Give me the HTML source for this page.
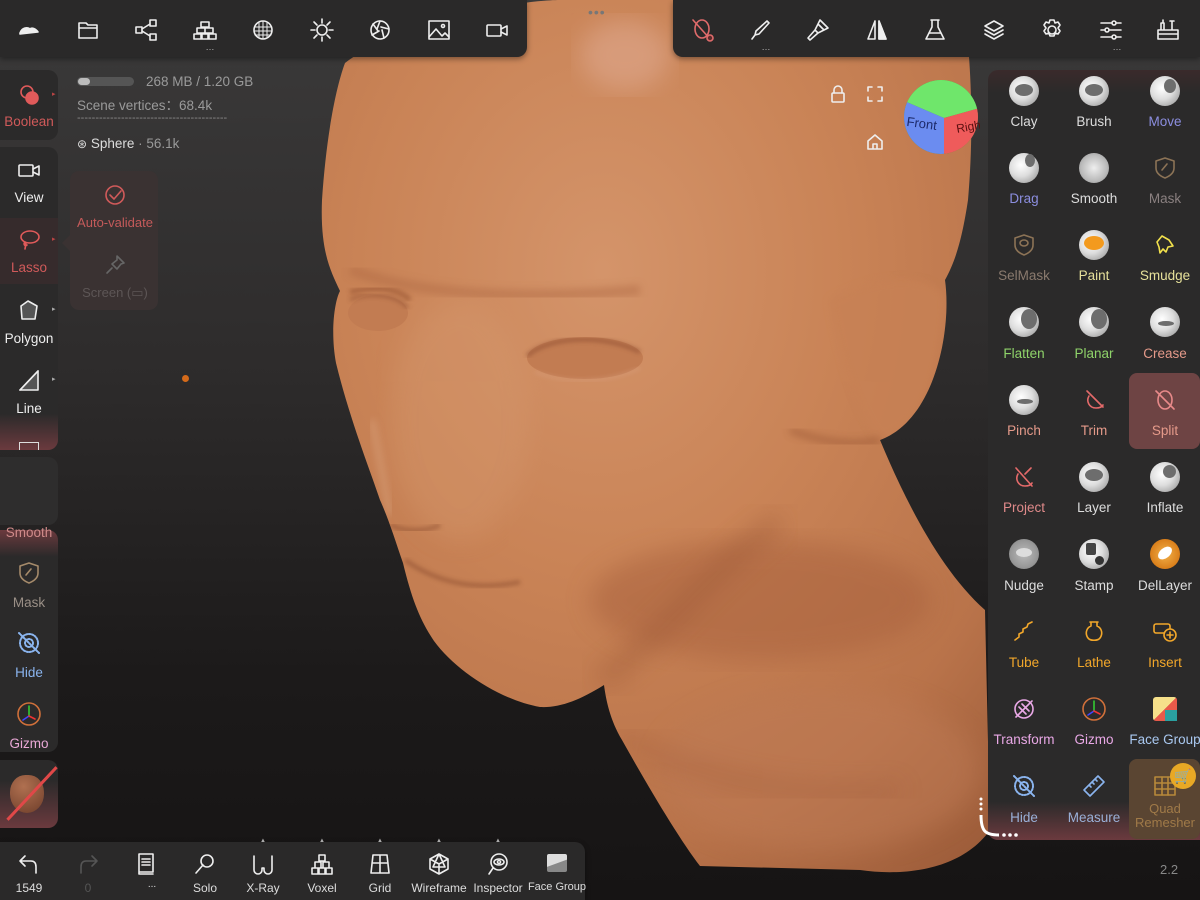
<!DOCTYPE html>
<html><head><meta charset="utf-8"><style>
*{margin:0;padding:0;box-sizing:border-box}
body{width:1200px;height:900px;overflow:hidden;position:relative;font-family:"Liberation Sans",sans-serif;background:linear-gradient(#3b3a3a 0%,#2e2c2c 40%,#1c1a1a 75%,#161414 100%)}
.abs{position:absolute}
.bar{position:absolute;background:#2a2929;box-shadow:0 2px 6px rgba(0,0,0,.4)}
.ic{position:absolute;width:26px;height:26px;transform:translate(-13px,-13px)}
.ic svg{width:26px;height:26px;fill:none;stroke:#eee;stroke-width:1.6;stroke-linecap:round;stroke-linejoin:round}
.lbl{position:absolute;transform:translateX(-50%);font-size:13.5px;white-space:nowrap;color:#ddd}
.dots{position:absolute;transform:translateX(-50%);font-size:9px;color:#bbb;letter-spacing:0}
.ball{position:absolute;width:30px;height:30px;border-radius:50%;transform:translate(-15px,-15px);background:radial-gradient(circle at 40% 40%,#fff 0%,#ddd 45%,#888 100%)}
.ball i{position:absolute;border-radius:50%;background:#6d6d6d}
.panel{position:absolute;background:#2b2a2a;border-radius:10px}
</style></head><body>

<!-- head -->
<svg class="abs" style="left:0;top:0" width="1200" height="900">
<defs>
<radialGradient id="hg" cx="0.42" cy="0.3" r="0.85">
<stop offset="0" stop-color="#d4946a"/><stop offset="0.4" stop-color="#c98356"/><stop offset="0.75" stop-color="#b9734a"/><stop offset="1" stop-color="#9a5a38"/></radialGradient>
<filter id="bl"><feGaussianBlur stdDeviation="12"/></filter>
<filter id="bl2"><feGaussianBlur stdDeviation="4"/></filter>
<filter id="bl3"><feGaussianBlur stdDeviation="2"/></filter>
<clipPath id="hc"><path d="M345 63 C400 20 520 0 560 0 L962 0 C970 40 975 120 968 200 C962 240 955 262 945 280 C952 330 935 420 880 440 C905 500 940 570 985 610 L990 830 C960 872 900 876 860 870 L700 866 C680 840 650 790 622 740 C610 720 606 700 604 685 C580 700 560 708 540 707 C500 700 455 670 434 641 C420 620 412 600 403 563 C395 540 389 520 380 500 C370 470 350 420 336 363 C330 330 335 300 340 291 C330 270 320 250 322 200 C326 140 335 90 345 63 Z"/></clipPath>
</defs>
<g clip-path="url(#hc)">
<rect x="300" y="0" width="720" height="900" fill="url(#hg)"/>
<ellipse cx="625" cy="55" rx="45" ry="35" fill="#e2ae98" opacity=".5" filter="url(#bl)"/>
<ellipse cx="460" cy="420" rx="70" ry="120" fill="#d69a70" opacity=".35" filter="url(#bl)"/>
<ellipse cx="760" cy="600" rx="170" ry="60" fill="#a7613d" opacity=".5" filter="url(#bl)"/>
<ellipse cx="820" cy="770" rx="160" ry="80" fill="#bd7a55" opacity=".5" filter="url(#bl)"/>
<path d="M620 735 C700 780 800 800 900 790" stroke="#a05c3a" stroke-width="14" opacity=".4" fill="none" filter="url(#bl)"/>
<path d="M350 270 C420 295 520 300 640 290" stroke="#b06b45" stroke-width="10" opacity=".5" fill="none" filter="url(#bl2)"/>
<path d="M350 292 C380 285 400 290 410 300" stroke="#965233" stroke-width="5" opacity=".6" fill="none" filter="url(#bl3)"/>
<ellipse cx="378" cy="313" rx="30" ry="18" fill="#c27c52"/>
<path d="M350 300 C365 292 395 293 408 308" stroke="#8e4e30" stroke-width="3" opacity=".6" fill="none" filter="url(#bl3)"/>
<ellipse cx="585" cy="358" rx="58" ry="21" fill="#c27c52"/>
<path d="M527 356 C545 338 600 332 640 352" stroke="#8e4e30" stroke-width="4" opacity=".6" fill="none" filter="url(#bl3)"/>
<path d="M535 372 C570 385 610 382 640 368" stroke="#d9a080" stroke-width="2" opacity=".7" fill="none" filter="url(#bl3)"/>
<path d="M600 680 C650 650 720 560 780 520" stroke="#9a5636" stroke-width="18" opacity=".45" fill="none" filter="url(#bl)"/>
<path d="M405 560 C440 585 480 590 520 582" stroke="#8e4f31" stroke-width="4" opacity=".6" fill="none" filter="url(#bl3)"/>
<path d="M390 525 C405 532 425 532 440 525" stroke="#8e4f31" stroke-width="5" opacity=".5" fill="none" filter="url(#bl3)"/>
<path d="M372 420 C380 460 385 490 390 515" stroke="#e0b090" stroke-width="5" opacity=".5" fill="none" filter="url(#bl2)"/>
<path d="M830 300 C880 270 940 275 945 300 C940 380 920 430 880 440 C860 420 840 360 830 300Z" fill="#c78155" opacity=".8" filter="url(#bl2)"/>
<path d="M790 430 C830 445 860 445 880 440" stroke="#9a5636" stroke-width="6" opacity=".6" fill="none" filter="url(#bl2)"/>
</g>
</svg>

<!-- top bars -->
<div class="bar" style="left:0;top:0;width:527px;height:57px;border-radius:0 0 10px 0"></div>
<div class="bar" style="left:673px;top:0;width:527px;height:57px;border-radius:0 0 0 10px"></div>
<div class="abs" style="left:588px;top:4px;color:#777;font-size:14px;letter-spacing:1px">•••</div>

<div class="ic" style="left:29px;top:30px"><svg viewBox="0 0 26 26"><path d="M4 16 C6 10 12 10 14 12 C16 10 20 12 22 15 L4 17Z" fill="#eee"/></svg></div>
<div class="ic" style="left:88px;top:30px"><svg viewBox="0 0 26 26"><path d="M4 6h7l2 2h9v13H4z M4 11h18"/></svg></div>
<div class="ic" style="left:146px;top:30px"><svg viewBox="0 0 26 26"><rect x="3" y="10" width="6" height="6"/><rect x="17" y="3" width="6" height="6"/><rect x="17" y="17" width="6" height="6"/><path d="M9 12l8-5M9 14l8 5"/></svg></div>
<div class="ic" style="left:205px;top:30px"><svg viewBox="0 0 26 26"><path d="M9 5h8v5H9zM5 11h8v5H5zM13 11h8v5h-8zM2 17h8v5H2zM9 17h8v5H9zM16 17h8v5h-8z"/></svg></div>
<div class="dots" style="left:210px;top:42px">…</div>
<div class="ic" style="left:263px;top:30px"><svg viewBox="0 0 26 26"><circle cx="13" cy="13" r="9"/><path d="M9 6v14M13 4v18M17 6v14M5 10h16M4 14h18M5 18h16" stroke-width="1"/></svg></div>
<div class="ic" style="left:322px;top:30px"><svg viewBox="0 0 26 26"><circle cx="13" cy="13" r="5"/><path d="M13 2v4M13 20v4M2 13h4M20 13h4M5 5l3 3M18 18l3 3M5 21l3-3M18 8l3-3"/></svg></div>
<div class="ic" style="left:380px;top:30px"><svg viewBox="0 0 26 26"><circle cx="13" cy="13" r="9"/><path d="M13 4l-3 8M22 12l-8-2M17 21l-2-8M5 18l7-4M6 7l5 7"/></svg></div>
<div class="ic" style="left:439px;top:30px"><svg viewBox="0 0 26 26"><rect x="3" y="4" width="20" height="18"/><path d="M3 20l7-8 6 7 3-3 4 4"/><circle cx="17" cy="9" r="1.5"/></svg></div>
<div class="ic" style="left:497px;top:30px"><svg viewBox="0 0 26 26"><rect x="3" y="8" width="14" height="11" rx="1"/><path d="M17 12l6-3v9l-6-3"/></svg></div>

<div class="ic" style="left:703px;top:30px"><svg viewBox="0 0 26 26" style="stroke:#e06b6b"><ellipse cx="12" cy="12" rx="7" ry="9"/><path d="M3 3l18 20"/><circle cx="20" cy="21" r="3" fill="#5a2c2c"/></svg></div>
<div class="ic" style="left:760px;top:30px"><svg viewBox="0 0 26 26"><path d="M20 4l2 2-10 11-4 1 1-4zM8 18l-3 4"/></svg></div>
<div class="dots" style="left:766px;top:42px">…</div>
<div class="ic" style="left:818px;top:30px"><svg viewBox="0 0 26 26"><path d="M15 3l8 8-4 2-6-6zM13 7l-3 6 3 3 6-3M10 13l-7 8 2 2 8-7"/></svg></div>
<div class="ic" style="left:877px;top:30px"><svg viewBox="0 0 26 26"><path d="M11 4v18H4zM15 4v18h7z" /><path d="M15 4l7 18h-7z" fill="#eee"/></svg></div>
<div class="ic" style="left:935px;top:30px"><svg viewBox="0 0 26 26"><path d="M9 3h8M10 3v7l-6 12h18l-6-12V3M7 16h12"/></svg></div>
<div class="ic" style="left:994px;top:30px"><svg viewBox="0 0 26 26"><path d="M13 4l9 5-9 5-9-5zM4 13l9 5 9-5M4 17l9 5 9-5"/></svg></div>
<div class="ic" style="left:1052px;top:30px"><svg viewBox="0 0 26 26"><circle cx="13" cy="13" r="4"/><path d="M11 3h4l1 3 3-1 2 3-2 3 2 3-2 3-3-1-1 3h-4l-1-3-3 1-2-3 2-3-2-3 2-3 3 1z"/></svg></div>
<div class="ic" style="left:1111px;top:30px"><svg viewBox="0 0 26 26"><path d="M3 6h20M3 13h20M3 20h20"/><circle cx="16" cy="6" r="2" fill="#2a2929"/><circle cx="9" cy="13" r="2" fill="#2a2929"/><circle cx="16" cy="20" r="2" fill="#2a2929"/></svg></div>
<div class="dots" style="left:1117px;top:42px">…</div>
<div class="ic" style="left:1168px;top:30px"><svg viewBox="0 0 26 26"><path d="M3 13h20v9H3zM3 17h20M6 13V6h3v7M17 13V4M15 4h4M8 3v3"/></svg></div>

<!-- info -->
<div class="abs" style="left:77px;top:77px;width:57px;height:9px;border-radius:5px;background:#555"></div>
<div class="abs" style="left:78px;top:78px;width:12px;height:7px;border-radius:4px;background:#bbb"></div>
<div class="abs" style="left:146px;top:74px;font-size:13.5px;color:#9a9a9a">268 MB / 1.20 GB</div>
<div class="abs" style="left:77px;top:94px;font-size:13.5px;color:#9a9a9a">Scene vertices：68.4k</div>
<div class="abs" style="left:77px;top:112px;font-size:11px;color:#888">-----------------------------------------</div>
<div class="abs" style="left:77px;top:136px;font-size:13.5px;color:#ddd"><span style="font-size:12px">⊛</span> Sphere <span style="color:#999">· 56.1k</span></div>
<div class="abs" style="left:182px;top:375px;width:7px;height:7px;border-radius:50%;background:#d46a1a"></div>

<!-- viewport icons -->
<div class="ic" style="left:838px;top:94px"><svg viewBox="0 0 26 26"><rect x="7" y="12" width="12" height="9" rx="1"/><path d="M9 12V9a4 4 0 018 0v3"/></svg></div>
<div class="ic" style="left:875px;top:94px"><svg viewBox="0 0 26 26"><path d="M6 10V6h4M16 6h4v4M20 16v4h-4M10 20H6v-4"/></svg></div>
<div class="ic" style="left:875px;top:142px"><svg viewBox="0 0 26 26"><path d="M6 12l7-6 7 6v8H6zM11 20v-5h4v5"/></svg></div>
<svg class="abs" style="left:902px;top:78px" width="78" height="78" viewBox="0 0 78 78">
<clipPath id="cc"><circle cx="39" cy="39" r="37"/></clipPath>
<g clip-path="url(#cc)"><rect width="78" height="78" fill="#3a9a3a"/><path d="M0 0h78v30L42 40 0 22z" fill="#6fe66b"/><path d="M0 22l42 18v38H0z" fill="#6b8cf0"/><path d="M42 40l36-10v48H42z" fill="#ef5b5b"/></g>
<text x="4" y="50" font-size="13" font-family="Liberation Sans" fill="#1d2a6a" transform="rotate(8 20 50)">Front</text>
<text x="55" y="54" font-size="12" font-family="Liberation Sans" fill="#5a1010" transform="rotate(-10 60 54)">Right</text>
</svg>

<!-- left column -->
<div class="panel" style="left:-10px;top:70px;width:68px;height:70px"></div>
<div class="ic" style="left:29px;top:95px"><svg viewBox="0 0 26 26" style="stroke:#e05a5a"><circle cx="11" cy="10" r="6"/><circle cx="16" cy="16" r="6" fill="#e05a5a"/></svg></div>
<div class="lbl" style="left:29px;top:114px;color:#d05a5a">Boolean</div>
<div class="abs" style="left:52px;top:90px;color:#b44;font-size:7px">▸</div>

<div class="panel" style="left:-10px;top:147px;width:68px;height:303px;background:linear-gradient(#2b2a2a 88%,#6b3a3e)"></div>
<div class="ic" style="left:29px;top:170px"><svg viewBox="0 0 26 26"><rect x="3" y="8" width="14" height="11" rx="1"/><path d="M17 12l6-3v9l-6-3"/></svg></div>
<div class="lbl" style="left:29px;top:190px;color:#eee">View</div>
<div class="abs" style="left:0;top:218px;width:58px;height:66px;background:#362b2c"></div>
<div class="ic" style="left:29px;top:240px"><svg viewBox="0 0 26 26" style="stroke:#e05a5a"><ellipse cx="14" cy="10" rx="9" ry="6"/><path d="M9 15c-2 2 0 5 2 3M10 16l-1 6"/></svg></div>
<div class="lbl" style="left:29px;top:260px;color:#d05a5a">Lasso</div>
<div class="abs" style="left:52px;top:235px;color:#b44;font-size:7px">▸</div>
<div class="ic" style="left:29px;top:310px"><svg viewBox="0 0 26 26"><path d="M5 9l7-5 9 5-2 13H6z" fill="#555"/></svg></div>
<div class="lbl" style="left:29px;top:331px;color:#eee">Polygon</div>
<div class="abs" style="left:52px;top:305px;color:#aaa;font-size:7px">▸</div>
<div class="ic" style="left:29px;top:380px"><svg viewBox="0 0 26 26"><path d="M4 23L22 4v19z" fill="#555"/><path d="M4 23L22 4"/></svg></div>
<div class="lbl" style="left:29px;top:401px;color:#eee">Line</div>
<div class="abs" style="left:52px;top:375px;color:#aaa;font-size:7px">▸</div>
<div class="abs" style="left:19px;top:442px;width:20px;height:8px;border:1.5px solid #ddd;border-bottom:none"></div>

<div class="panel" style="left:-10px;top:457px;width:68px;height:68px;background:#2e2d2d"></div>
<div class="panel" style="left:-10px;top:530px;width:68px;height:222px;background:linear-gradient(#6b3a3e,#2b2a2a 12%)"></div>
<div class="lbl" style="left:29px;top:525px;color:#d08a8a">Smooth</div>
<div class="ic" style="left:29px;top:573px"><svg viewBox="0 0 26 26" style="stroke:#a58a6a"><path d="M13 3l9 3v7c0 5-4 8-9 10-5-2-9-5-9-10V6z"/><path d="M15 9l-5 6"/></svg></div>
<div class="lbl" style="left:29px;top:595px;color:#9a8f86">Mask</div>
<div class="ic" style="left:29px;top:643px"><svg viewBox="0 0 26 26" style="stroke:#8ab4ee;stroke-dasharray:1.5 1.5;stroke-width:2"><circle cx="13" cy="13" r="9"/><circle cx="13" cy="13" r="4"/><path d="M3 3l20 20"/></svg></div>
<div class="lbl" style="left:29px;top:665px;color:#8ab4ee">Hide</div>
<div class="ic" style="left:29px;top:714px"><svg viewBox="0 0 26 26"><circle cx="13" cy="13" r="11" style="stroke:#d0703a"/><path d="M13 5v10" style="stroke:#3c3"/><path d="M13 15l-6 4" style="stroke:#44f"/><path d="M13 15l6 3" style="stroke:#e33"/></svg></div>
<div class="lbl" style="left:29px;top:736px;color:#e9a8d6">Gizmo</div>

<div class="panel" style="left:-10px;top:760px;width:68px;height:68px;background:linear-gradient(#2b2a2a 30%,#6b3a3e)"></div>
<div class="abs" style="left:10px;top:775px;width:34px;height:38px;border-radius:45% 45% 50% 50%;background:radial-gradient(circle at 40% 30%,#b07050,#6e3e2a)"></div>
<div class="abs" style="left:-4px;top:792px;width:72px;height:3px;background:#e04848;transform:rotate(-47deg)"></div>

<!-- popup -->
<div class="abs" style="left:70px;top:171px;width:88px;height:139px;border-radius:9px;background:#3a3232"></div>
<div class="abs" style="left:62px;top:235px;width:0;height:0;border:8px solid transparent;border-right-color:#3a3232;border-left:none"></div>
<div class="ic" style="left:115px;top:195px"><svg viewBox="0 0 26 26" style="stroke:#d05a5a"><circle cx="13" cy="13" r="9"/><path d="M8 13l4 4 7-8"/></svg></div>
<div class="lbl" style="left:115px;top:215px;color:#c45a5a;font-size:13px">Auto-validate</div>
<div class="ic" style="left:115px;top:265px"><svg viewBox="0 0 26 26" style="stroke:#666"><path d="M15 4l7 7-3 1-4 5-5-5 5-4zM10 16l-5 5"/></svg></div>
<div class="lbl" style="left:115px;top:285px;color:#5d5656;font-size:13px">Screen (▭)</div>

<!-- right panel -->
<div class="panel" style="left:988px;top:70px;width:222px;height:770px;background:linear-gradient(#3a2a2b,#2b2a2a 3%,#2b2a2a 95%,#6b3a3e)"></div>
<div class="abs" style="left:1129px;top:373px;width:71px;height:76px;border-radius:8px;background:#6e4444"></div>
<div class="abs" style="left:1129px;top:759px;width:71px;height:80px;border-radius:8px;background:#5a4532"></div>

<div class="ball" style="left:1024px;top:91px"><i style="left:6px;top:8px;width:18px;height:12px"></i></div>
<div class="ball" style="left:1094px;top:91px"><i style="left:6px;top:8px;width:18px;height:12px"></i></div>
<div class="ball" style="left:1165px;top:91px"><i style="left:14px;top:3px;width:12px;height:14px"></i></div>
<div class="lbl" style="left:1024px;top:114px">Clay</div><div class="lbl" style="left:1094px;top:114px">Brush</div><div class="lbl" style="left:1165px;top:114px;color:#8c8ee0">Move</div>

<div class="ball" style="left:1024px;top:168px"><i style="left:16px;top:1px;width:10px;height:13px"></i></div>
<div class="ball" style="left:1094px;top:168px;background:radial-gradient(circle,#eee,#bbb 60%,#888)"></div>
<div class="ic" style="left:1165px;top:168px"><svg viewBox="0 0 26 26" style="stroke:#8c7356"><path d="M13 3l9 3v7c0 5-4 8-9 10-5-2-9-5-9-10V6z"/><path d="M15 9l-5 6"/></svg></div>
<div class="lbl" style="left:1024px;top:191px;color:#8c8ee0">Drag</div><div class="lbl" style="left:1094px;top:191px">Smooth</div><div class="lbl" style="left:1165px;top:191px;color:#8a8080">Mask</div>

<div class="ic" style="left:1024px;top:245px"><svg viewBox="0 0 26 26" style="stroke:#8c7356"><path d="M13 3l9 3v7c0 5-4 8-9 10-5-2-9-5-9-10V6z"/><ellipse cx="13" cy="11" rx="4" ry="3"/></svg></div>
<div class="ball" style="left:1094px;top:245px"><i style="left:5px;top:6px;width:20px;height:14px;background:#f39a1e"></i></div>
<div class="ic" style="left:1165px;top:245px"><svg viewBox="0 0 26 26" style="stroke:#f2e14c"><path d="M5 10l5-6 7 4 4 6-5 1-2 5-3-3-3 4-1-6z"/></svg></div>
<div class="lbl" style="left:1024px;top:268px;color:#8a7a6e">SelMask</div><div class="lbl" style="left:1094px;top:268px;color:#e6e09a">Paint</div><div class="lbl" style="left:1165px;top:268px;color:#e6e09a">Smudge</div>

<div class="ball" style="left:1024px;top:322px"><i style="left:12px;top:2px;width:16px;height:20px"></i></div>
<div class="ball" style="left:1094px;top:322px"><i style="left:12px;top:2px;width:16px;height:20px"></i></div>
<div class="ball" style="left:1165px;top:322px"><i style="left:8px;top:14px;width:16px;height:5px"></i></div>
<div class="lbl" style="left:1024px;top:346px;color:#8fd36a">Flatten</div><div class="lbl" style="left:1094px;top:346px;color:#8fd36a">Planar</div><div class="lbl" style="left:1165px;top:346px;color:#e59a8a">Crease</div>

<div class="ball" style="left:1024px;top:400px"><i style="left:8px;top:14px;width:16px;height:5px"></i></div>
<div class="ic" style="left:1094px;top:400px"><svg viewBox="0 0 26 26" style="stroke:#e46a6a"><path d="M6 4l16 16M8 9c-3 5 0 12 7 12 3 0 6-1 7-3"/></svg></div>
<div class="ic" style="left:1165px;top:400px"><svg viewBox="0 0 26 26" style="stroke:#e88a8a"><ellipse cx="13" cy="13" rx="7" ry="9"/><path d="M4 4l18 18"/></svg></div>
<div class="lbl" style="left:1024px;top:423px;color:#e59a8a">Pinch</div><div class="lbl" style="left:1094px;top:423px;color:#e59a8a">Trim</div><div class="lbl" style="left:1165px;top:423px;color:#e59a8a">Split</div>

<div class="ic" style="left:1024px;top:477px"><svg viewBox="0 0 26 26" style="stroke:#e46a6a"><path d="M5 4l16 18M7 10c-3 5 0 12 7 12 3 0 6-1 7-3M20 4l-6 6"/></svg></div>
<div class="ball" style="left:1094px;top:477px"><i style="left:6px;top:7px;width:18px;height:12px"></i></div>
<div class="ball" style="left:1165px;top:477px"><i style="left:13px;top:3px;width:13px;height:13px"></i></div>
<div class="lbl" style="left:1024px;top:500px;color:#e08a8a">Project</div><div class="lbl" style="left:1094px;top:500px">Layer</div><div class="lbl" style="left:1165px;top:500px">Inflate</div>

<div class="ball" style="left:1024px;top:554px;background:radial-gradient(circle,#bbb,#999 60%,#777)"><i style="left:7px;top:9px;width:16px;height:9px;background:#ddd"></i></div>
<div class="ball" style="left:1094px;top:554px"><i style="left:7px;top:4px;width:10px;height:12px;border-radius:2px;background:#444"></i><i style="left:16px;top:17px;width:9px;height:9px;background:#333"></i></div>
<div class="ball" style="left:1165px;top:554px;background:radial-gradient(circle,#f3b24a,#d97e1a 70%,#a05a10)"><i style="left:7px;top:9px;width:16px;height:10px;background:#fff;transform:rotate(-40deg)"></i></div>
<div class="lbl" style="left:1024px;top:578px">Nudge</div><div class="lbl" style="left:1094px;top:578px">Stamp</div><div class="lbl" style="left:1165px;top:578px">DelLayer</div>

<div class="ic" style="left:1024px;top:632px"><svg viewBox="0 0 26 26" style="stroke:#f2a72a"><path d="M4 21l4-3v-3l4-2v-3l4-2 1-3 4-2"/></svg></div>
<div class="ic" style="left:1094px;top:632px"><svg viewBox="0 0 26 26" style="stroke:#f2a72a"><path d="M9 3h8M10 3v4c-5 2-6 8-3 12 2 3 10 3 12 0 3-4 2-10-3-12V3"/></svg></div>
<div class="ic" style="left:1165px;top:632px"><svg viewBox="0 0 26 26" style="stroke:#f2a72a"><rect x="2" y="5" width="16" height="9" rx="2"/><circle cx="18" cy="16" r="6" fill="#2b2a2a"/><path d="M18 13v6M15 16h6"/></svg></div>
<div class="lbl" style="left:1024px;top:655px;color:#f2a72a">Tube</div><div class="lbl" style="left:1094px;top:655px;color:#f2a72a">Lathe</div><div class="lbl" style="left:1165px;top:655px;color:#f2a72a">Insert</div>

<div class="ic" style="left:1024px;top:709px"><svg viewBox="0 0 26 26" style="stroke:#e9a8e6"><circle cx="13" cy="13" r="9"/><path d="M5 21L21 5M8 11l7 7M11 8l7 7"/></svg></div>
<div class="ic" style="left:1094px;top:709px"><svg viewBox="0 0 26 26"><circle cx="13" cy="13" r="11" style="stroke:#d0703a"/><path d="M13 5v10" style="stroke:#3c3"/><path d="M13 15l-6 4" style="stroke:#44f"/><path d="M13 15l6 3" style="stroke:#e33"/></svg></div>
<div class="abs" style="left:1153px;top:697px;width:24px;height:24px;border-radius:3px;background:linear-gradient(135deg,#f6e08a 50%,#e85a4a 50%)"><div style="position:absolute;right:0;bottom:0;width:12px;height:11px;background:#2aa0a0"></div></div>
<div class="lbl" style="left:1024px;top:732px;color:#e9a8e6">Transform</div><div class="lbl" style="left:1094px;top:732px;color:#e9a8e6">Gizmo</div><div class="lbl" style="left:1165px;top:732px;color:#a9c8f0">Face Group</div>

<div class="ic" style="left:1024px;top:786px"><svg viewBox="0 0 26 26" style="stroke:#8ab4ee;stroke-dasharray:1.5 1.5;stroke-width:2"><circle cx="13" cy="13" r="9"/><circle cx="13" cy="13" r="4"/><path d="M3 3l20 20"/></svg></div>
<div class="ic" style="left:1094px;top:786px"><svg viewBox="0 0 26 26" style="stroke:#8ab4ee"><path d="M3 17L17 3l6 6L9 23z M8 12l2 2M11 9l2 2M14 6l2 2"/></svg></div>
<div class="ic" style="left:1165px;top:786px"><svg viewBox="0 0 26 26" style="stroke:#b8893a"><rect x="3" y="4" width="20" height="18"/><path d="M3 10h20M3 16h20M10 4v18M16 4v18"/></svg></div>
<div class="abs" style="left:1170px;top:763px;width:26px;height:26px;border-radius:50%;background:#e8a825;color:#222;font-size:14px;text-align:center;line-height:26px">🛒</div>
<div class="lbl" style="left:1024px;top:810px;color:#9ab0d8">Hide</div><div class="lbl" style="left:1094px;top:810px;color:#9ab0d8">Measure</div>
<div class="lbl" style="left:1165px;top:802px;color:#a07a48;font-size:13px;line-height:14px;text-align:center">Quad<br>Remesher</div>

<!-- corner dots -->
<svg class="abs" style="left:975px;top:795px" width="50" height="48"><path d="M6 20 C6 36 10 40 24 40" stroke="#fff" stroke-width="3" fill="none"/><circle cx="6" cy="4" r="1.5" fill="#fff"/><circle cx="6" cy="9" r="1.5" fill="#fff"/><circle cx="6" cy="14" r="1.5" fill="#fff"/><circle cx="29" cy="40" r="1.8" fill="#fff"/><circle cx="35" cy="40" r="1.8" fill="#fff"/><circle cx="41" cy="40" r="1.8" fill="#fff"/></svg>
<div class="abs" style="left:1160px;top:862px;color:#888;font-size:13px">2.2</div>

<!-- bottom bar -->
<div class="bar" style="left:0;top:842px;width:585px;height:58px;border-radius:0 10px 0 0"></div>
<div class="ic" style="left:29px;top:864px"><svg viewBox="0 0 26 26"><path d="M9 5L4 10l5 5M4 10h11c4 0 5 3 5 6v6"/></svg></div>
<div class="lbl" style="left:29px;top:881px;font-size:12px">1549</div>
<div class="ic" style="left:88px;top:864px"><svg viewBox="0 0 26 26" style="stroke:#555"><path d="M17 5l5 5-5 5M22 10H11c-4 0-5 3-5 6v6"/></svg></div>
<div class="lbl" style="left:88px;top:881px;font-size:12px;color:#555">0</div>
<div class="ic" style="left:146px;top:864px"><svg viewBox="0 0 26 26"><path d="M6 3h14v18H6zM6 21v2h14M9 8h8M9 11h8M9 14h8"/></svg></div>
<div class="lbl" style="left:152px;top:879px;font-size:10px">...</div>
<div class="ic" style="left:205px;top:864px"><svg viewBox="0 0 26 26"><circle cx="15" cy="10" r="6"/><path d="M11 14l-7 8"/></svg></div>
<div class="lbl" style="left:205px;top:881px;font-size:12px">Solo</div>
<div class="ic" style="left:263px;top:864px"><svg viewBox="0 0 26 26"><path d="M4 5v14a4 4 0 008 0v-2h2v2a4 4 0 008 0V5"/></svg></div>
<div class="lbl" style="left:263px;top:881px;font-size:12px">X-Ray</div>
<div class="ic" style="left:322px;top:864px"><svg viewBox="0 0 26 26"><path d="M10 4h6v6h-6zM6 11h6v6H6zM14 11h6v6h-6zM3 17h6v6H3zM10 17h6v6h-6zM17 17h6v6h-6z"/></svg></div>
<div class="lbl" style="left:322px;top:881px;font-size:12px">Voxel</div>
<div class="ic" style="left:380px;top:864px"><svg viewBox="0 0 26 26"><path d="M6 4h14l2 18H4zM13 4v18M5 12h16"/></svg></div>
<div class="lbl" style="left:380px;top:881px;font-size:12px">Grid</div>
<div class="ic" style="left:439px;top:864px"><svg viewBox="0 0 26 26"><path d="M13 3l9 5v10l-9 5-9-5V8zM4 8l9 5 9-5M13 13v10M7 16l6-13 6 13z"/></svg></div>
<div class="lbl" style="left:439px;top:881px;font-size:12px">Wireframe</div>
<div class="ic" style="left:498px;top:864px"><svg viewBox="0 0 26 26"><circle cx="14" cy="11" r="8"/><ellipse cx="14" cy="11" rx="5" ry="3"/><circle cx="14" cy="11" r="1.5"/><path d="M8 17l-4 6"/></svg></div>
<div class="lbl" style="left:498px;top:881px;font-size:12px">Inspector</div>
<div class="abs" style="left:547px;top:854px;width:20px;height:18px;border-radius:2px;background:linear-gradient(160deg,#ddd 50%,#888 52%)"></div>
<div class="lbl" style="left:557px;top:881px;font-size:11px">Face Group</div>
<div class="abs" style="left:260px;top:838px;color:#aaa;font-size:6px">▲</div>
<div class="abs" style="left:319px;top:838px;color:#aaa;font-size:6px">▲</div>
<div class="abs" style="left:377px;top:838px;color:#aaa;font-size:6px">▲</div>
<div class="abs" style="left:436px;top:838px;color:#aaa;font-size:6px">▲</div>
<div class="abs" style="left:495px;top:838px;color:#aaa;font-size:6px">▲</div>
</body></html>
